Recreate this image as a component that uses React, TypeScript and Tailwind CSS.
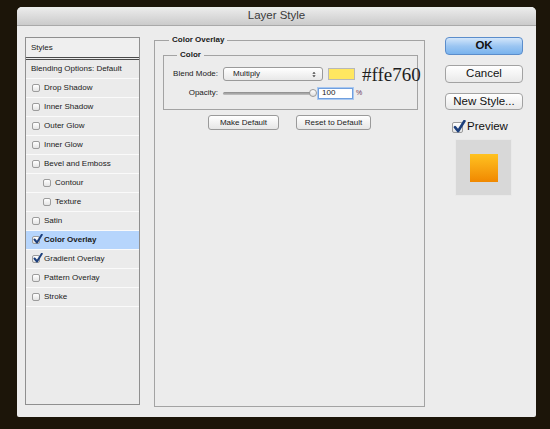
import React from 'react';

type Item = { label: string; checked?: boolean; indent?: boolean; active?: boolean };

const items: Item[] = [
  { label: 'Drop Shadow' },
  { label: 'Inner Shadow' },
  { label: 'Outer Glow' },
  { label: 'Inner Glow' },
  { label: 'Bevel and Emboss' },
  { label: 'Contour', indent: true },
  { label: 'Texture', indent: true },
  { label: 'Satin' },
  { label: 'Color Overlay', checked: true, active: true },
  { label: 'Gradient Overlay', checked: true },
  { label: 'Pattern Overlay' },
  { label: 'Stroke' },
];

const Check: React.FC<{ checked?: boolean; size?: number }> = ({ checked, size = 8 }) => (
  <span
    className="relative shrink-0 rounded-[2px] border border-[#9c9c9c] bg-gradient-to-b from-[#ffffff] to-[#e4e4e4]"
    style={{ width: size, height: size }}
  >
    {checked && (
      <svg
        viewBox="0 0 10 10"
        className="absolute left-[0px] top-[-3px]"
        style={{ width: size + 2, height: size + 2 }}
      >
        <path d="M1.5 5.5 L4 8.5 L8.8 0.8" fill="none" stroke="#1c3f7c" strokeWidth="2" strokeLinecap="round" strokeLinejoin="round" />
      </svg>
    )}
  </span>
);

const SmallButton: React.FC<{ label: string; width: string }> = ({ label, width }) => (
  <div
    className={`${width} h-[15px] flex items-center justify-center rounded-[3px] border border-[#9a9a9a] bg-gradient-to-b from-[#ffffff] to-[#e6e6e6] text-[8px] text-[#1a1a1a]`}
  >
    {label}
  </div>
);

export default function App() {
  return (
    <div className="w-[550px] h-[429px] bg-[#1c1509] pt-[7px] pl-[17px] font-['Liberation_Sans',Arial,sans-serif]">
      <div className="w-[519px] h-[410px] bg-[#ececec] rounded-t-[5px] rounded-b-[2px] flex flex-col overflow-hidden">
        {/* title bar */}
        <div className="h-[19px] shrink-0 bg-gradient-to-b from-[#ededed] to-[#cbcbcb] border-b border-[#a9a9a9] flex items-center justify-center text-[11.5px] text-[#3a3a3a]">
          Layer Style
        </div>

        <div className="flex items-start pl-[8px] pt-[11px]">
          {/* styles list */}
          <div className="w-[115px] h-[368px] shrink-0 border border-[#8f8f8f] bg-[#ebebeb] flex flex-col text-[8px] text-[#1a1a1a]">
            <div className="h-[20px] flex items-center pl-[5px] border-b border-[#4a4a4a] bg-[#efefef]">Styles</div>
            <div className="mt-[1px] h-[20px] flex items-center pl-[5px] border-t border-b border-t-[#4a4a4a] border-b-[#fafafa]">
              Blending Options: Default
            </div>
            {items.map((it) => (
              <div
                key={it.label}
                className={`h-[19px] flex items-center gap-[4px] border-b border-[#fafafa] ${it.indent ? 'pl-[17px]' : 'pl-[6px]'} ${it.active ? 'bg-[#b6d5fc] font-bold' : ''}`}
              >
                <Check checked={it.checked} />
                <span>{it.label}</span>
              </div>
            ))}
          </div>

          {/* settings */}
          <fieldset className="ml-[14px] mt-[-2px] w-[271px] min-w-0 h-[372px] shrink-0 border border-[#a3a3a3] flex flex-col">
            <legend className="ml-[14px] px-[3px] text-[8px] leading-[10px] font-bold text-[#1a1a1a]">Color Overlay</legend>

            <fieldset className="mt-[5px] ml-[8px] mr-[6px] min-w-0 h-[60px] border border-[#a3a3a3]">
              <legend className="ml-[13px] px-[3px] text-[8px] leading-[10px] font-bold text-[#1a1a1a]">Color</legend>

              <div className="mt-[7px] h-[14px] flex items-center text-[8px] text-[#1a1a1a]">
                <span className="w-[54px] shrink-0 text-right">Blend Mode:</span>
                <div className="ml-[5px] w-[100px] shrink-0 h-[14px] rounded-[3px] border border-[#9a9a9a] bg-gradient-to-b from-[#ffffff] to-[#e8e8e8] flex items-center justify-between pl-[9px] pr-[6px]">
                  <span>Multiply</span>
                  <svg viewBox="0 0 6 10" className="w-[4px] h-[7px]">
                    <path d="M0.5 4 L3 1 L5.5 4 Z M0.5 6 L3 9 L5.5 6 Z" fill="#444" />
                  </svg>
                </div>
                <div className="ml-[5px] w-[27px] shrink-0 h-[12px] bg-[#ffe760] border border-[#b8b8b8]" />
                <span className="ml-[7px] whitespace-nowrap font-['Liberation_Serif','Times_New_Roman',serif] text-[19px] leading-none text-[#1e1e1e]">
                  #ffe760
                </span>
              </div>

              <div className="mt-[6px] h-[12px] flex items-center text-[8px] text-[#1a1a1a]">
                <span className="w-[54px] shrink-0 text-right">Opacity:</span>
                <div className="ml-[5px] w-[90px] shrink-0 h-[8px] relative flex items-center">
                  <div className="w-full h-[3px] rounded-full bg-gradient-to-b from-[#8a8a8a] to-[#c4c4c4]" />
                  <div className="absolute right-[-4px] top-[0px] w-[8px] h-[8px] rounded-full border border-[#9a9a9a] bg-gradient-to-b from-[#ffffff] to-[#dedede]" />
                </div>
                <div className="ml-[5px] w-[35px] shrink-0 h-[11px] bg-white border border-[#6f9fdf] shadow-[0_0_0_1px_#a9c8f0] flex items-center pl-[3px]">
                  100
                </div>
                <span className="ml-[3px] text-[7px] text-[#6b3453]">%</span>
              </div>
            </fieldset>

            <div className="mt-[5px] flex justify-center gap-[17px]">
              <SmallButton label="Make Default" width="w-[71px]" />
              <SmallButton label="Reset to Default" width="w-[75px]" />
            </div>
          </fieldset>

          {/* buttons */}
          <div className="ml-[20px] w-[78px] shrink-0 flex flex-col text-[11.5px] text-[#111]">
            <div className="h-[18px] rounded-[4px] border border-[#5b8dcb] bg-gradient-to-b from-[#d3e6fa] via-[#9cc6f2] to-[#79b3ee] flex items-center justify-center font-bold">
              OK
            </div>
            <div className="mt-[10px] h-[18px] rounded-[4px] border border-[#a2a2a2] bg-gradient-to-b from-[#ffffff] to-[#e9e9e9] flex items-center justify-center">
              Cancel
            </div>
            <div className="mt-[10px] h-[17px] rounded-[4px] border border-[#a2a2a2] bg-gradient-to-b from-[#ffffff] to-[#e9e9e9] flex items-center justify-center">
              New Style...
            </div>
            <div className="mt-[11px] h-[12px] pl-[7px] flex items-center gap-[4px]">
              <Check checked size={11} />
              <span>Preview</span>
            </div>
            <div className="mt-[6px] ml-[10px] w-[57px] h-[57px] bg-[#d8d8d8] border border-[#e9e9e9] flex items-center justify-center">
              <div className="w-[28px] h-[28px] bg-gradient-to-b from-[#ffc21f] to-[#f08800]" />
            </div>
          </div>
        </div>
      </div>
    </div>
  );
}
